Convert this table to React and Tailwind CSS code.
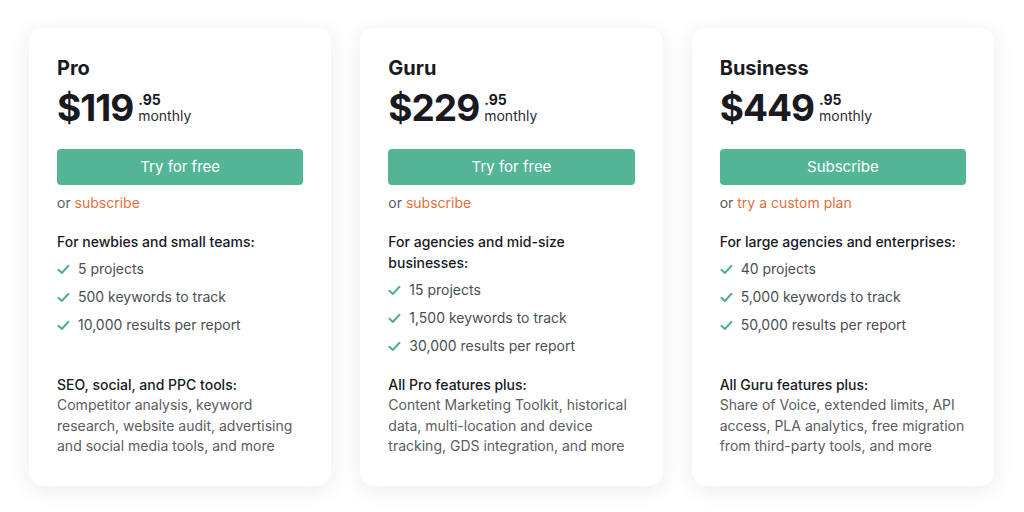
const plans = [
  {
    name: 'Pro',
    price: '$119',
    cents: '.95',
    cta: 'Try for free',
    alt: 'subscribe',
    audience: 'For newbies and small teams:',
    items: ['5 projects', '500 keywords to track', '10,000 results per report'],
    extraTitle: 'SEO, social, and PPC tools:',
    extraText: 'Competitor analysis, keyword research, website audit, advertising and social media tools, and more',
  },
  {
    name: 'Guru',
    price: '$229',
    cents: '.95',
    cta: 'Try for free',
    alt: 'subscribe',
    audience: 'For agencies and mid-size businesses:',
    items: ['15 projects', '1,500 keywords to track', '30,000 results per report'],
    extraTitle: 'All Pro features plus:',
    extraText: 'Content Marketing Toolkit, historical data, multi-location and device tracking, GDS integration, and more',
  },
  {
    name: 'Business',
    price: '$449',
    cents: '.95',
    cta: 'Subscribe',
    alt: 'try a custom plan',
    audience: 'For large agencies and enterprises:',
    items: ['40 projects', '5,000 keywords to track', '50,000 results per report'],
    extraTitle: 'All Guru features plus:',
    extraText: 'Share of Voice, extended limits, API access, PLA analytics, free migration from third-party tools, and more',
  },
];

function Check() {
  return (
    <svg width="13" height="11" viewBox="0 0 13 11" fill="none" className="shrink-0">
      <path d="M1.5 5.8 L4.8 9 L11.5 1.8" stroke="#4fb08f" strokeWidth="2" strokeLinecap="round" strokeLinejoin="round" />
    </svg>
  );
}

function PlanCard({ plan }) {
  return (
    <div className="flex flex-col rounded-[14px] bg-white px-[28px] pt-[28px] pb-[29px] shadow-[0_4px_22px_rgba(20,30,60,0.09)]">
      <h2 className="text-[20px] font-bold leading-6 text-[#181a1f]">{plan.name}</h2>
      <div className="mt-[6px] flex items-center gap-[5px]">
        <span className="text-[37px] font-bold leading-[44px] tracking-[-1px] text-[#181a1f]">{plan.price}</span>
        <div className="flex flex-col">
          <span className="text-[14px] font-bold leading-[15px] text-[#181a1f]">{plan.cents}</span>
          <span className="text-[14px] leading-[17px] text-[#2a2c31]">monthly</span>
        </div>
      </div>
      <button className="mt-[19px] h-9 w-full rounded-[4px] bg-[#53b596] text-[15px] text-white">
        {plan.cta}
      </button>
      <p className="mt-2 text-[14px] leading-5 text-[#5a5c61]">
        or <span className="text-[#e5703e]">{plan.alt}</span>
      </p>
      <p className="mt-[18px] text-[14px] font-medium leading-[21px] text-[#181a1f]">{plan.audience}</p>
      <ul className="mt-[5px] flex flex-col gap-1">
        {plan.items.map((item) => (
          <li key={item} className="flex items-center gap-[8px] text-[14px] leading-6 text-[#4b4e54]">
            <Check />
            {item}
          </li>
        ))}
      </ul>
      <div className="mt-auto pt-4">
        <p className="text-[14px] font-medium leading-[21px] text-[#181a1f]">{plan.extraTitle}</p>
        <p className="text-[14px] leading-[20.5px] text-[#5a5c61]">{plan.extraText}</p>
      </div>
    </div>
  );
}

export default function App() {
  return (
    <div
      className="h-[512px] w-[1024px] bg-white pl-[29px] pt-[28px]"
      style={{ fontFamily: 'Inter, "Noto Sans", sans-serif' }}
    >
      <div className="grid w-[965px] grid-cols-3 gap-[29px]">
        {plans.map((plan) => (
          <PlanCard key={plan.name} plan={plan} />
        ))}
      </div>
    </div>
  );
}
